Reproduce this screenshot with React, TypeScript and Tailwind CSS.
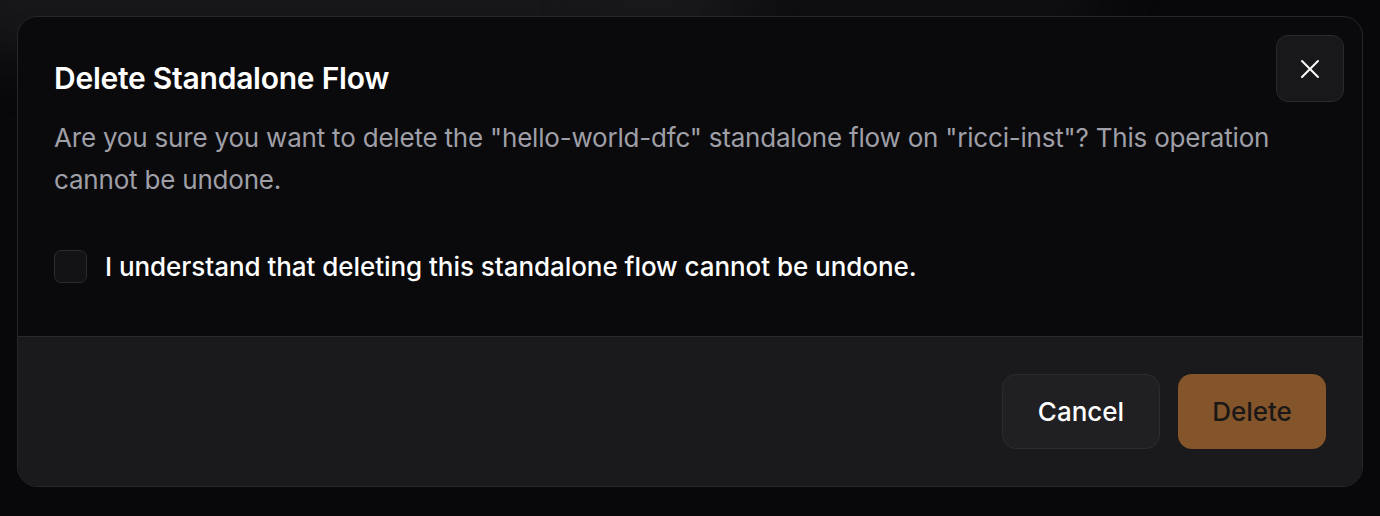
import { X } from "lucide-react";

const font = { fontFamily: "Inter, 'Noto Sans', sans-serif" };

const App = () => {
  return (
    <div
      className="relative w-[1380px] h-[516px] overflow-hidden bg-[#08080a] pt-[16px] px-[17px]"
      style={font}
    >
      <div className="absolute -top-[40px] left-[-60px] w-[800px] h-[90px] rounded-full bg-[#2a2a2e] opacity-50 blur-[30px]" />
      <div className="absolute -top-[30px] left-[600px] w-[500px] h-[60px] rounded-full bg-[#1c1c20] opacity-50 blur-[30px]" />

      <div className="relative rounded-[20px] border border-[#27272a] bg-[#0a0a0c] overflow-hidden">
        <button className="absolute top-[18px] right-[18px] w-[68px] h-[67px] flex items-center justify-center rounded-[12px] border border-[#2a2a2d] bg-[#18181b] text-white">
          <X size={32} strokeWidth={1.5} />
        </button>

        <div className="px-[36px] pt-[40px] pb-[49px]">
          <h2 className="text-[30px] leading-[42px] font-semibold text-white tracking-[-0.25px]">
            Delete Standalone Flow
          </h2>
          <p className="mt-[18px] text-[26px] leading-[42px] text-[#9f9fa7] tracking-[-0.2px]">
            Are you sure you want to delete the "hello-world-dfc" standalone flow on "ricci-inst"? This operation cannot be undone.
          </p>
          <label className="mt-[44px] flex items-center gap-[18px] h-[42px]">
            <span className="w-[33px] h-[33px] rounded-[7px] border border-[#2c2c30] bg-[#131316]" />
            <span className="text-[26px] font-medium text-white tracking-[-0.05px]">
              I understand that deleting this standalone flow cannot be undone.
            </span>
          </label>
        </div>

        <div className="border-t border-[#2a2a2d] bg-[#1a1a1c] flex justify-end gap-[18px] px-[36px] pt-[37px] pb-[37px]">
          <button className="w-[158px] h-[75px] rounded-[14px] border border-[#2c2c2f] bg-[#202022] text-[26px] font-medium text-white">
            Cancel
          </button>
          <button className="w-[148px] h-[75px] rounded-[14px] bg-[#84542a] text-[26px] font-medium text-[#1a1816]">
            Delete
          </button>
        </div>
      </div>
    </div>
  );
};

export default App;
